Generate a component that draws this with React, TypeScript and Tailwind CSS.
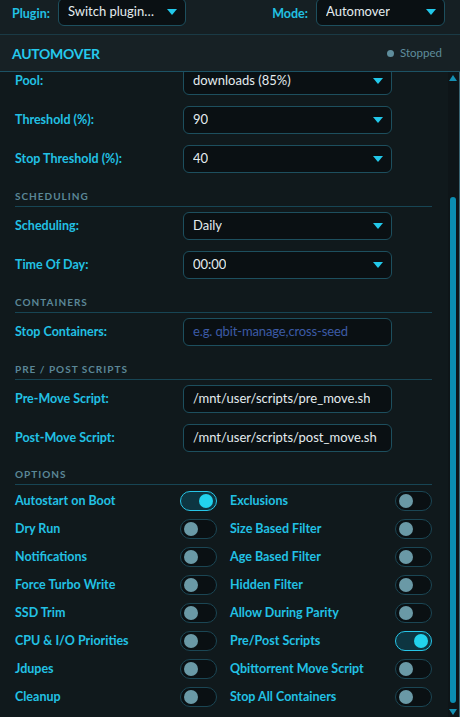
import { useState } from 'react'

const FONT = { fontFamily: 'Lato, "Open Sans", "Noto Sans", sans-serif' }

function Caret() {
  return (
    <svg width="10" height="6" viewBox="0 0 10 6" className="shrink-0">
      <path d="M0 0 L10 0 L5 6 Z" fill="#22c8ea" />
    </svg>
  )
}

function SelectBox({ value, className = '' }: { value: string; className?: string }) {
  return (
    <div
      className={`flex items-center justify-between h-[28px] pl-[9px] pr-[8px] rounded-[6px] border border-[#1d4f5e] bg-[#0a1013] text-[13px] text-[#e4ecef] ${className}`}
    >
      <span className="truncate">{value}</span>
      <Caret />
    </div>
  )
}

function TextBox({ value, placeholder }: { value?: string; placeholder?: string }) {
  return (
    <div className="flex items-center h-[28px] w-[209px] pl-[9px] rounded-[6px] border border-[#1d4f5e] bg-[#0a1013] text-[13px]">
      {value ? (
        <span className="text-[#e4ecef] truncate">{value}</span>
      ) : (
        <span className="text-[#3c5ba6] truncate tracking-[-0.01em]">{placeholder}</span>
      )}
    </div>
  )
}

function Field({ label, children, className = '' }: { label: string; children: React.ReactNode; className?: string }) {
  return (
    <div className={`flex items-center ${className}`}>
      <div className="w-[168px] text-[12.5px] font-bold text-[#22c1e4]">{label}</div>
      {children}
    </div>
  )
}

function Section({ title }: { title: string }) {
  return (
    <div className="mt-[17px] pb-[4px] border-b border-[#174554] text-[10px] font-bold tracking-[0.1em] text-[#5b8797] leading-[12px]">
      {title}
    </div>
  )
}

function Toggle({ on, onClick }: { on: boolean; onClick: () => void }) {
  return (
    <button
      onClick={onClick}
      className={`flex items-center w-[37px] h-[20px] rounded-full border px-[3px] ${
        on ? 'bg-[#0d3541] border-[#27c6e8] justify-end' : 'bg-[#0a1013] border-[#1b4654] justify-start'
      }`}
    >
      <span className={`block w-[14px] h-[14px] rounded-full ${on ? 'bg-[#22d3ee]' : 'bg-[#6a99a6]'}`} />
    </button>
  )
}

const OPTIONS: [string, string][] = [
  ['Autostart on Boot', 'Exclusions'],
  ['Dry Run', 'Size Based Filter'],
  ['Notifications', 'Age Based Filter'],
  ['Force Turbo Write', 'Hidden Filter'],
  ['SSD Trim', 'Allow During Parity'],
  ['CPU & I/O Priorities', 'Pre/Post Scripts'],
  ['Jdupes', 'Qbittorrent Move Script'],
  ['Cleanup', 'Stop All Containers'],
]

export default function App() {
  const [toggles, setToggles] = useState<Record<string, boolean>>({
    'Autostart on Boot': true,
    'Pre/Post Scripts': true,
  })

  const flip = (k: string) => setToggles(t => ({ ...t, [k]: !t[k] }))

  return (
    <div className="w-[460px] h-[717px] bg-[#10191c] flex flex-col overflow-hidden" style={FONT}>

      {/* Top bar */}
      <div className="h-[35px] shrink-0 bg-[#151f23] border-b border-[#1a3a45] flex justify-between pl-[12px] pr-[15px]">
        <div className="flex items-start gap-[8px]">
          <span className="mt-[5px] text-[12.5px] font-bold text-[#22c1e4]">Plugin:</span>
          <SelectBox value="Switch plugin…" className="w-[128px] -mt-[2px]" />
        </div>
        <div className="flex items-start gap-[8px]">
          <span className="mt-[5px] text-[12.5px] font-bold text-[#22c1e4]">Mode:</span>
          <SelectBox value="Automover" className="w-[129px] -mt-[2px]" />
        </div>
      </div>

      {/* Header */}
      <div className="h-[37px] shrink-0 bg-[#172125] border-b border-[#1c5264] flex items-center justify-between pl-[12px] pr-[18px]">
        <span className="text-[14px] font-bold text-[#25c9ec] tracking-[-0.02em]">AUTOMOVER</span>
        <div className="flex items-center gap-[6px] text-[11.5px] text-[#5f8d9c]">
          <span className="w-[7px] h-[7px] rounded-full bg-[#5f8d9c]" />
          Stopped
        </div>
      </div>

      {/* Body + scrollbar */}
      <div className="flex flex-1 min-h-0">
        <div className="flex-1 overflow-hidden">
          <div className="-mt-[5px] pl-[15px] pr-[16px]">
            <Field label="Pool:">
              <SelectBox value="downloads (85%)" className="w-[209px]" />
            </Field>
            <Field label="Threshold (%):" className="mt-[11px]">
              <SelectBox value="90" className="w-[209px]" />
            </Field>
            <Field label="Stop Threshold (%):" className="mt-[11px]">
              <SelectBox value="40" className="w-[209px]" />
            </Field>

            <Section title="SCHEDULING" />
            <Field label="Scheduling:" className="mt-[5px]">
              <SelectBox value="Daily" className="w-[209px]" />
            </Field>
            <Field label="Time Of Day:" className="mt-[11px]">
              <SelectBox value="00:00" className="w-[209px]" />
            </Field>

            <Section title="CONTAINERS" />
            <Field label="Stop Containers:" className="mt-[5px]">
              <TextBox placeholder="e.g. qbit-manage,cross-seed" />
            </Field>

            <Section title="PRE / POST SCRIPTS" />
            <Field label="Pre-Move Script:" className="mt-[5px]">
              <TextBox value="/mnt/user/scripts/pre_move.sh" />
            </Field>
            <Field label="Post-Move Script:" className="mt-[11px]">
              <TextBox value="/mnt/user/scripts/post_move.sh" />
            </Field>

            <div className="-mt-[1px]">
              <Section title="OPTIONS" />
            </div>
            <div className="mt-[2px] grid grid-cols-2 gap-x-[13px]">
              {OPTIONS.map(([a, b]) => (
                [a, b].map(k => (
                  <div key={k} className="h-[28px] flex items-center justify-between">
                    <span className="text-[12.5px] font-bold text-[#22c1e4]">{k}</span>
                    <Toggle on={!!toggles[k]} onClick={() => flip(k)} />
                  </div>
                ))
              ))}
            </div>
          </div>
        </div>

        {/* Scrollbar */}
        <div className="w-[12px] shrink-0 bg-[#0e1518] border-r border-[#3a6674] flex flex-col items-center">
          <svg width="8" height="6" viewBox="0 0 8 6" className="mt-[3px] ml-[-2px]">
            <path d="M0 6 L4 0 L8 6 Z" fill="#1590b3" />
          </svg>
          <div className="flex-1 w-full flex flex-col pt-[116px] pb-[6px] pl-[2px] pr-[3px]">
            <div className="flex-1 rounded-[3px] bg-[#0b8db1]" />
          </div>
          <svg width="8" height="6" viewBox="0 0 8 6" className="mb-[2px] ml-[-2px]">
            <path d="M0 0 L8 0 L4 6 Z" fill="#1590b3" />
          </svg>
        </div>
      </div>
    </div>
  )
}
